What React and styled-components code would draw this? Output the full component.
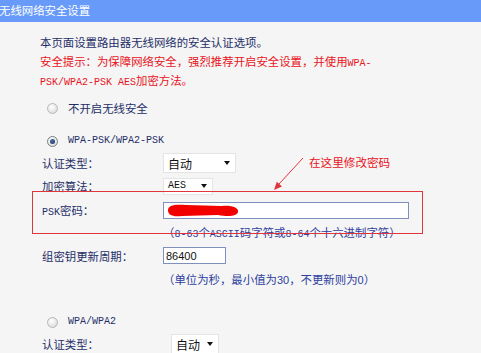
import React from 'react';
import styled, { createGlobalStyle } from 'styled-components';

const GlobalStyle = createGlobalStyle`
  html, body {
    margin: 0;
    padding: 0;
    background: #f5f5f5;
  }
  body {
    font-family: "Noto Sans CJK SC", "Liberation Sans", sans-serif;
    font-size: 11.4px;
    color: #1f2f68;
  }
`;

const Page = styled.div`
  position: relative;
  width: 481px;
  height: 353px;
  overflow: hidden;
  background: #f5f5f5;
`;

const TitleBar = styled.div`
  height: 22px;
  background: #689bf9;
  color: #fff;
  line-height: 20px;
  white-space: nowrap;
  text-indent: -1px;
`;

const Body = styled.div`
  padding: 11px 0 0 40px;
`;

const IntroLine = styled.div`
  height: 19px;
  line-height: 19px;
  white-space: nowrap;
  color: ${(p) => (p.$red ? '#e8141c' : '#1f2f68')};
`;

const Mono = styled.span`
  font-family: "Liberation Mono", "DejaVu Sans Mono", monospace;
  font-size: 10px;
  line-height: 1;
`;

const OptionRow = styled.div`
  display: flex;
  align-items: center;
  gap: 10px;
  height: 20px;
  margin-top: ${(p) => p.$mt}px;
  padding-left: 7px;
`;

const Radio = styled.span`
  box-sizing: border-box;
  width: 11px;
  height: 11px;
  border-radius: 50%;
  border: 1px solid ${(p) => (p.$checked ? '#7a7f8a' : '#b8b8b8')};
  background: radial-gradient(circle at 40% 35%, #ffffff 0%, #e8e8e8 55%, #cdcdcd 100%);
  display: flex;
  align-items: center;
  justify-content: center;

  &::after {
    content: '';
    display: ${(p) => (p.$checked ? 'block' : 'none')};
    width: 5px;
    height: 5px;
    border-radius: 50%;
    background: radial-gradient(circle at 40% 35%, #4a6fa8 0%, #1c2f55 100%);
  }
`;

const Field = styled.div`
  display: flex;
  align-items: center;
  height: ${(p) => p.$h}px;
  margin-top: ${(p) => p.$mt}px;
  padding-left: 2px;
  white-space: nowrap;
`;

const Label = styled.span`
  flex: none;
  width: 121px;
`;

const Select = styled.div`
  box-sizing: border-box;
  width: ${(p) => p.$w}px;
  height: ${(p) => p.$h}px;
  margin-left: ${(p) => p.$ml || 0}px;
  padding: 0 5px 0 4px;
  background: #fff;
  border: 1px solid #e4e4e4;
  display: flex;
  align-items: center;
  justify-content: space-between;
  color: #111;
  font-size: 12px;
`;

const Caret = styled.span`
  width: 0;
  height: 0;
  border-left: 3.5px solid transparent;
  border-right: 3.5px solid transparent;
  border-top: 4px solid #111;
`;

const TextBox = styled.div`
  box-sizing: border-box;
  width: ${(p) => p.$w}px;
  height: 17px;
  padding-left: 2px;
  background: #fff;
  border: 1px solid #7f90bd;
  display: flex;
  align-items: center;
  font-family: "Liberation Sans", Arial, sans-serif;
  font-size: 11px;
  color: #111;
`;

const Hint = styled.div`
  height: 18px;
  line-height: 18px;
  margin-top: ${(p) => p.$mt}px;
  padding-left: 123px;
  color: #2d40a0;
  white-space: nowrap;
`;

const NumText = styled.span`
  font-family: "Liberation Sans", Arial, sans-serif;
  font-size: 11px;
  line-height: 1;
`;

const Callout = styled.div`
  position: absolute;
  left: 32px;
  top: 191px;
  width: 391px;
  height: 43px;
  box-sizing: border-box;
  border: 1px solid #e0353b;
  pointer-events: none;
`;

const Note = styled.span`
  position: absolute;
  left: 309px;
  top: 152px;
  line-height: 20px;
  color: #e8141c;
  font-size: 11.6px;
  white-space: nowrap;
`;

const Arrow = styled.svg`
  position: absolute;
  left: 270px;
  top: 155px;
  overflow: visible;
`;

function Scribble() {
  return (
    <svg width="74" height="15" viewBox="0 0 74 15">
      <path
        d="M2,7 C2,2 9,1 20,2 L56,3 C66,2 73,5 72,9 C71,13 63,14 52,12 L16,13 C6,14 2,12 2,7 Z"
        fill="#f20000"
      />
    </svg>
  );
}

export default function App() {
  return (
    <Page>
      <GlobalStyle />
      <TitleBar>无线网络安全设置</TitleBar>
      <Body>
        <IntroLine>本页面设置路由器无线网络的安全认证选项。</IntroLine>
        <IntroLine $red>
          安全提示：为保障网络安全，强烈推荐开启安全设置，并使用<Mono>WPA-</Mono>
        </IntroLine>
        <IntroLine $red>
          <Mono>PSK/WPA2-PSK AES</Mono>加密方法。
        </IntroLine>

        <OptionRow $mt={8}>
          <Radio />
          <span>不开启无线安全</span>
        </OptionRow>
        <OptionRow $mt={13}>
          <Radio $checked />
          <Mono>WPA-PSK/WPA2-PSK</Mono>
        </OptionRow>

        <Field $h={22} $mt={1}>
          <Label>认证类型：</Label>
          <Select $w={73} $h={20}>
            <span>自动</span>
            <Caret />
          </Select>
        </Field>
        <Field $h={22} $mt={1}>
          <Label>加密算法：</Label>
          <Select $w={50} $h={17}>
            <Mono>AES</Mono>
            <Caret />
          </Select>
        </Field>
        <Field $h={22} $mt={2}>
          <Label>
            <Mono>PSK</Mono>密码：
          </Label>
          <TextBox $w={246}>
            <Scribble />
          </TextBox>
        </Field>
        <Hint $mt={2}>
          （<Mono>8-63</Mono>个<Mono>ASCII</Mono>码字符或<Mono>8-64</Mono>个十六进制字符）
        </Hint>
        <Field $h={21} $mt={4}>
          <Label>组密钥更新周期：</Label>
          <TextBox $w={63}>86400</TextBox>
        </Field>
        <Hint $mt={4}>
          （单位为秒，最小值为<NumText>30</NumText>，不更新则为<NumText>0</NumText>）
        </Hint>

        <OptionRow $mt={24}>
          <Radio />
          <Mono>WPA/WPA2</Mono>
        </OptionRow>
        <Field $h={22} $mt={1}>
          <Label>认证类型：</Label>
          <Select $w={48} $h={20} $ml={8}>
            <span>自动</span>
            <Caret />
          </Select>
        </Field>
      </Body>

      <Callout />
      <Arrow width="40" height="40">
        <line x1="33" y1="3" x2="9" y2="29" stroke="#e0353b" strokeWidth="1" />
        <polygon points="4,35 12,31.5 6.8,26.8" fill="#e0353b" />
      </Arrow>
      <Note>在这里修改密码</Note>
    </Page>
  );
}
